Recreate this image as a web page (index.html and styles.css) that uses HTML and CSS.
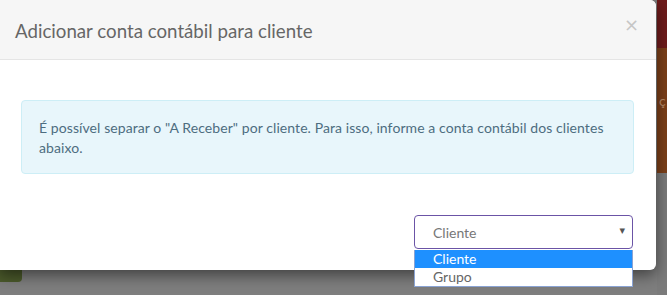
FILE: index.html
```html
<!DOCTYPE html>
<html lang="pt-BR">
<head>
    <meta charset="UTF-8">
    <meta name="viewport" content="width=device-width, initial-scale=1.0">
    <title>Adicionar conta contábil para cliente</title>
    <link rel="stylesheet" href="styles.css">
</head>
<body>
    <div class="page-bg">
      <div class="bg-main"></div>
      <div class="bg-side">
        <div class="side-red"></div>
        <div class="side-brown"><span>ç</span></div>
        <div class="side-gray"></div>
      </div>
    </div>
    <div class="bg-green"></div>

    <div class="modal">
      <div class="modal-header">
        <h4 class="modal-title">Adicionar conta contábil para cliente</h4>
        <button class="close" type="button">&times;</button>
      </div>
      <div class="modal-body">
        <div class="alert-info">
          É possível separar o "A Receber" por cliente. Para isso, informe a conta contábil dos clientes abaixo.
        </div>
        <div class="select-row">
          <div class="select-wrap">
            <div class="select-box">
              <span>Cliente</span>
              <span class="caret">&#9662;</span>
            </div>
            <ul class="select-list">
              <li class="active">Cliente</li>
              <li>Grupo</li>
            </ul>
          </div>
        </div>
      </div>
    </div>
</body>
</html>
```

FILE: styles.css
```css
html, body {
  margin: 0;
  padding: 0;
  width: 667px;
  height: 295px;
  overflow: hidden;
}
body {
  position: relative;
  background: #7e7e7e;
  font-family: Lato, "Liberation Sans", sans-serif;
}
.page-bg {
  display: flex;
  height: 295px;
}
.bg-main {
  flex: 1;
}
.bg-side {
  width: 10px;
  display: flex;
  flex-direction: column;
}
.side-red {
  height: 48px;
  background: #6e1b1b;
}
.side-brown {
  height: 125px;
  background: #7b3f19;
  color: #b88c6c;
  font-size: 14px;
  overflow: hidden;
  white-space: nowrap;
}
.side-brown span {
  display: block;
  margin-top: 44px;
  margin-left: 2px;
}
.side-gray {
  flex: 1;
  background: #7b7b7b;
}
.bg-green {
  position: absolute;
  left: 0;
  top: 262px;
  width: 22px;
  height: 20px;
  background: #4b5a2b;
  border-radius: 0 0 4px 0;
}

.modal {
  position: absolute;
  top: 0;
  left: -1px;
  width: 657px;
  height: 270px;
  background: #fff;
  border-radius: 0 6px 6px 0;
  box-shadow: 0 5px 15px rgba(0, 0, 0, 0.5);
  box-sizing: border-box;
}
.modal-header {
  display: flex;
  align-items: center;
  justify-content: space-between;
  height: 59px;
  padding: 0 17px 0 16px;
  background: #f6f6f6;
  border-bottom: 1px solid #e5e5e5;
  border-radius: 0 6px 0 0;
}
.modal-title {
  margin: 2px 0 0 0;
  font-size: 18.7px;
  font-weight: normal;
  color: #666;
}
.close {
  border: none;
  background: none;
  padding: 0;
  margin-top: -10px;
  font-family: "DejaVu Sans", sans-serif;
  font-size: 18px;
  color: #c6c6c6;
  cursor: pointer;
}
.modal-body {
  padding: 40px 22px 0 22px;
}
.alert-info {
  padding: 17px 17px 15px 17px;
  background: #e8f6fb;
  border: 1px solid #cdeef6;
  border-radius: 4px;
  color: #4d6d80;
  font-size: 14px;
  line-height: 20px;
  letter-spacing: 0.08px;
}
.select-row {
  display: flex;
  justify-content: flex-end;
  margin-top: 41px;
  padding-right: 1px;
}
.select-wrap {
  position: relative;
  width: 219px;
}
.select-box {
  display: flex;
  align-items: center;
  justify-content: space-between;
  height: 34px;
  padding: 0 7px 0 18px;
  border: 1px solid #6b54a6;
  border-radius: 4px;
  box-sizing: border-box;
  color: #777;
  font-size: 14px;
}
.caret {
  font-family: "DejaVu Sans", sans-serif;
  font-size: 11px;
  color: #555;
  margin-top: -3px;
}
.select-list {
  position: absolute;
  top: 35px;
  left: 0;
  right: 0;
  margin: 0;
  padding: 0;
  list-style: none;
  background: #fff;
  border: 1px solid #8aa3d3;
  border-top: none;
  font-size: 14px;
  color: #666;
}
.select-list li {
  height: 18px;
  line-height: 18px;
  padding-left: 18px;
}
.select-list li.active {
  background: #1e90ff;
  color: #fff;
}
```
